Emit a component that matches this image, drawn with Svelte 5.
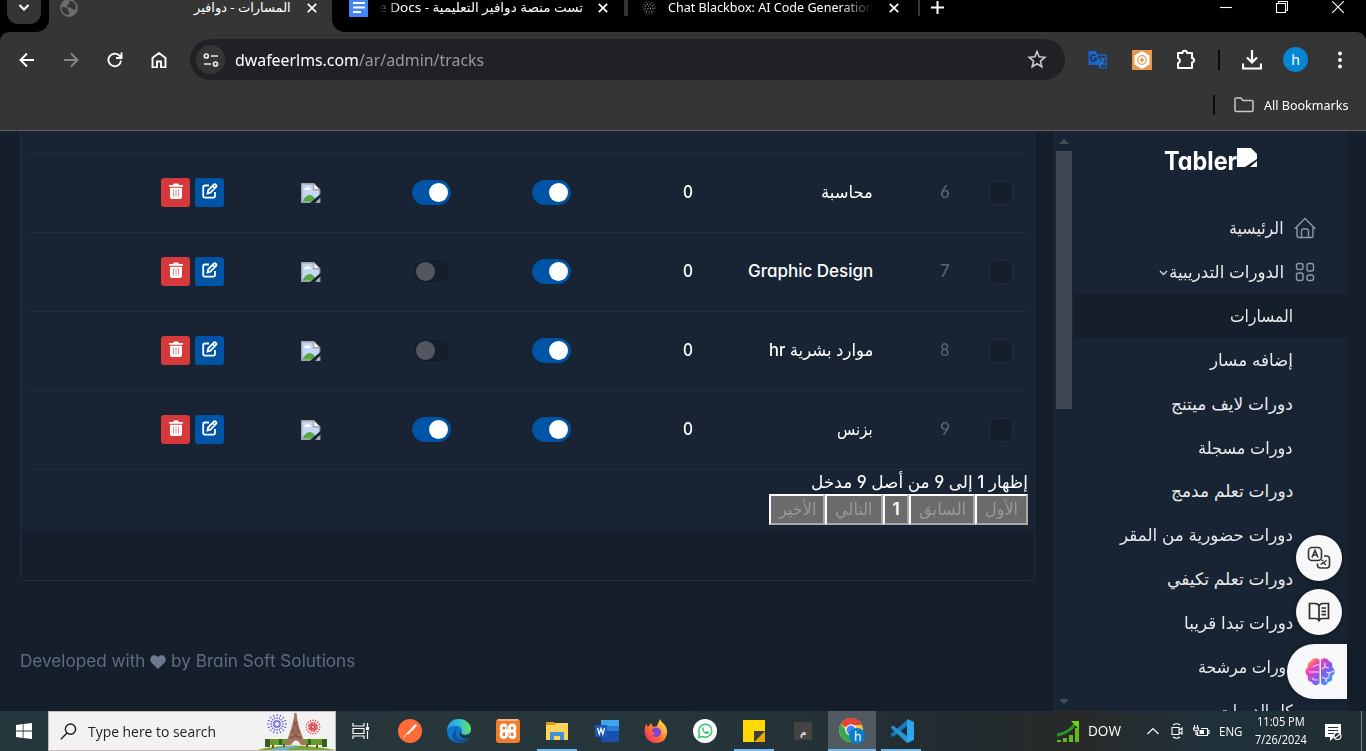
<script>
  function fit(node, w) {
    node.style.transform = `scaleX(${w / node.offsetWidth})`;
  }
  const rows = [
    { n: 6, name: 'محاسبة', w: 52, live: true },
    { n: 7, name: 'Graphic Design', w: 125, live: false },
    { n: 8, name: 'موارد بشرية hr', w: 104, live: false },
    { n: 9, name: 'بزنس', w: 36, live: true }
  ];
  const links = [
    ['المسارات', 63], ['إضافه مسار', 83], ['دورات لايف ميتنج', 122], ['دورات مسجلة', 95],
    ['دورات تعلم مدمج', 122], ['دورات حضورية من المقر', 173], ['دورات تعلم تكيفي', 126],
    ['دورات تبدا قريبا', 109], ['دورات مرشحة', 95], ['كل الدورات', 75]
  ];
  const pages = [['الأخير', 56, 37], ['التالي', 58, 38], ['1', 26, 7], ['السابق', 66, 47], ['الأول', 53, 33]];
  const rays = Array.from({ length: 16 }, (_, i) => i * 22.5);
</script>

{#snippet T(text, w)}<span class="fit" style="width:{w}px"><bdi use:fit={w}>{text}</bdi></span>{/snippet}
{#snippet X()}<svg class="x" viewBox="0 0 10 10"><path d="M.8.8 9.2 9.2M9.2.8.8 9.2" /></svg>{/snippet}

<div class="screen">
  <header class="tabs">
    <div class="corner"><div class="tabsearch"><svg width="12" height="8" viewBox="0 0 12 8"><path d="m1.500 1 4.500 4.500L10.500 1" fill="none" stroke="#fff" stroke-width="2" /></svg></div></div>
    <div class="tab active">
      <svg width="18" height="18" viewBox="0 0 18 18"><circle cx="9" cy="9" r="9" fill="#686b70" /><path d="M2 8c3 0 6 1 6 3s2 1 1 5C4 16 1 12 2 8ZM9 2c4 0 6 2 7 5l-1 4-3-1c-1-3-5 0-5-3 0-2 3-1 2-5Z" fill="#353535" /></svg>
      <div class="grow"></div>{@render T('المسارات - دوافير', 97)}{@render X()}
    </div>
    <div class="rest">
      <svg class="docs" width="20" height="22" viewBox="0 0 20 22"><path fill="#4285f4" d="M0 0h19v22H0z" /><path d="M4 8h12M4 12.500h12M4 17h8" stroke="#fff" stroke-width="2" /></svg>
      <div class="fadel">{@render T('تست منصة دوافير التعليمية - e Docs', 204)}</div>
      {@render X()}
      <i class="sep wide"></i>
      <svg class="bb" width="14" height="14" viewBox="0 0 14 14"><g fill="none" stroke="#999" stroke-width="1.200" stroke-dasharray="1.200 1.500"><circle cx="7" cy="7" r="1.500" /><circle cx="7" cy="7" r="4" /><circle cx="7" cy="7" r="6" stroke="#555" /></g></svg>
      <div class="fader">{@render T('Chat Blackbox: AI Code Generation', 206)}</div>
      {@render X()}
      <i class="sep"></i>
      <svg class="plus" width="13" height="13" viewBox="0 0 13 13"><path d="M6.500 0v13M0 6.500h13" stroke="#fff" stroke-width="2" /></svg>
      <div class="grow"></div>
      <div class="win">
        <svg width="12" height="12" viewBox="0 0 12 12"><path d="M0 6.500h12" /></svg>
        <svg width="12" height="12" viewBox="0 0 12 12"><path d="M.5 2.500h9v9h-9zM2.500 2.500v-2h9v9h-2" /></svg>
        <svg width="12" height="12" viewBox="0 0 12 12"><path d="m0 0 12 12M12 0 0 12" /></svg>
      </div>
    </div>
  </header>

  <section class="toolbar">
    <div class="bar">
      <nav class="navs">
        <svg viewBox="0 0 16 16"><path d="M15 8H2M8 1.500 1.500 8 8 14.500" /></svg>
        <svg viewBox="0 0 16 16" class="dim"><path d="M1 8h13M8 1.500 14.500 8 8 14.500" /></svg>
        <svg viewBox="0 0 16 16"><path d="M14 8.500a6.300 6.300 0 1 1-2-5.200L14.500 5.500M14.500.5v5.500H9" /></svg>
        <svg viewBox="0 0 16 16"><path d="M1.500 15.500V6L8 1l6.500 5v9.500H10v-6H6v6Z" /></svg>
      </nav>
      <div class="omni">
        <div class="site"><svg width="16" height="14" viewBox="0 0 16 14"><g fill="none" stroke="#e8e8e8" stroke-width="1.700"><circle cx="3.300" cy="3" r="2" /><circle cx="12.500" cy="11" r="2" /><path d="M8 3h7M1 11h7" /></g></svg></div>
        <span class="fit url" style="width:249px"><bdi use:fit={249}>dwafeerlms.com<span>/ar/admin/tracks</span></bdi></span>
        <div class="grow"></div>
        <svg width="20" height="19" viewBox="0 0 20 19"><path d="m10 1.500 2.100 5.300 5.700.5-4.300 3.800 1.300 5.600L10 13.700l-4.800 3 1.300-5.600-4.300-3.800 5.700-.5Z" fill="none" stroke="#ccc" stroke-width="1.600" /></svg>
      </div>
      <div class="ext">
        <svg width="20" height="20" viewBox="0 0 20 20"><path d="M1.500 1H8l1.200 3.500h8.300q1.300 0 1.300 1.300v11.400q0 1.300-1.300 1.300h-6L10.300 15H1.500Q.5 15 .5 14V2q0-1 1-1Z" fill="#1967d2" /><path d="M9.700 5.800h7q.8 0 .8.800v10q0 .8-.8.800h-4l1-2.500Z" fill="#2c3a4d" /><path d="M7.500 5.800A3 3 0 1 0 8.500 8.500H5.800" fill="none" stroke="#26303f" stroke-width="1.500" /><path d="M11.500 9H17M14.200 7.500V9M16 9c-.5 2.500-1.500 4-3 5M12.500 11l4 3.800" fill="none" stroke="#2b7de0" stroke-width="1.200" /></svg>
        <svg width="20" height="20" viewBox="0 0 20 20"><path d="M0 0h20v20H0z" fill="#e9974b" /><path d="m10 1 7.500 4.500v9L10 19l-7.500-4.500v-9Z" fill="#fff" /><circle cx="10" cy="10" r="4.300" fill="none" stroke="#e99645" stroke-width="1.200" /><path d="M10 7.800v4.400M7.800 10h4.400" stroke="#e99645" stroke-width="1.600" /></svg>
        <svg width="22" height="22" viewBox="0 0 22 22"><path d="M3 4H7.500a2.200 2.200 0 0 1 4.500 0h5v5.200a2.100 2.100 0 0 1 0 4.200V19H3v-4.800q2-.8 2-2.600T3 9Z" fill="none" stroke="#fff" stroke-width="2" stroke-linejoin="round" /></svg>
        <i class="div"></i>
        <svg width="20" height="20" viewBox="0 0 20 20"><path d="M10 0v12M5 7.500l5 5 5-5M1 13.500v5h18v-5" fill="none" stroke="#fff" stroke-width="2.200" /></svg>
        <b class="ava">h</b>
        <svg width="6" height="20" viewBox="0 0 6 20" fill="#fff"><circle cx="3" cy="3.500" r="1.900" /><circle cx="3" cy="10" r="1.900" /><circle cx="3" cy="16.500" r="1.900" /></svg>
      </div>
    </div>
    <div class="marks">
      <i class="div"></i>
      <svg width="20" height="16" viewBox="0 0 20 16"><path d="M1 13V2q0-1 1-1h5l2 2.500h9q1 0 1 1V13q0 1.500-1 1.500H2Q1 14.500 1 13Z" fill="none" stroke="#c7c7c7" stroke-width="1.500" /></svg>
      {@render T('All Bookmarks', 85)}
    </div>
  </section>

  <main class="page">
    <section class="content">
      <div class="card">
        <div class="table">
          <div class="stub"></div>
          {#each rows as r}
            <div class="row">
              <div class="acts">
                <span class="btn red"><svg width="14" height="16" viewBox="0 0 14 16"><path fill="#fff" d="M0 2h4l1-1.500h4L10 2h4v1.800H0ZM1 4.800h12V14q0 2-2 2H3q-2 0-2-2Z" /><path d="M4.500 6.500v7M7 6.500v7M9.500 6.500v7" stroke="#e68a8a" /></svg></span>
                <span class="btn blue"><svg width="16" height="16" viewBox="0 0 16 16"><path d="M7 2.500H3Q1.200 2.500 1.200 4.300v8.500q0 1.800 1.800 1.800h8.200q1.800 0 1.800-1.800V9M5.500 10.500l.7-3.200 5.600-5.600q1-1 2.100.1t.1 2.200L8.400 9.600ZM10.500 3l2.400 2.400" fill="none" stroke="#fff" stroke-width="1.800" /></svg></span>
              </div>
              <div><svg class="broken" width="20" height="20" viewBox="0 0 20 20"><path d="M.7.7h12l6 6v12.600H.7Z" fill="#c4d7f7" stroke="#a2a2a2" stroke-width="1.400" /><path d="M3 7q0-2 2-2 1-2 3 0 2 0 2 2Z" fill="#fff" /><path d="M1.500 18.500q3-7 8-6.500 4 1 6 6.500Z" fill="#58a942" /><path d="M12.500.7v6h6" fill="#fff" stroke="#a2a2a2" stroke-width="1.400" /><path d="m9 20 11-9.500V14l-6 6Z" fill="#182433" /></svg></div>
              <div><i class="sw" class:on={r.live}></i></div>
              <div><i class="sw on"></i></div>
              <div class="num">{@render T('0', 10)}</div>
              <div class="num">{@render T(r.name, r.w)}</div>
              <div class="idx">{@render T(String(r.n), 10)}</div>
              <div><i class="chk"></i></div>
            </div>
          {/each}
          <div class="info">{@render T('إظهار 1 إلى 9 من أصل 9 مدخل', 217)}</div>
          <div class="pager">
            {#each pages as [t, w, tw]}<span class="pg" class:cur={t === '1'} style="width:{w}px">{@render T(t, tw)}</span>{/each}
          </div>
        </div>
      </div>
      <footer>
        {@render T('Developed with', 125)}
        <svg width="16" height="14" viewBox="0 0 16 14"><path d="M8 14 1.300 7.500C-2 3.500 3-3 8 2c5-5 10 1.500 6.700 5.500Z" fill="#6c7a91" /></svg>
        {@render T('by Brain Soft Solutions', 184)}
      </footer>
    </section>

    <aside>
      <div class="scroll">
        <i class="up"></i><i class="thumb"></i><i class="grow"></i><i class="down"></i>
      </div>
      <div class="side">
        <div class="brand">{@render T('Tabler', 73)}<svg width="20" height="19" viewBox="0 0 20 19"><path d="M0 0h14l6 6v5L8 19H0ZM20 13v6h-7Z" fill="#fff" /></svg></div>
        <div class="item top">{@render T('الرئيسية', 55)}<svg width="22" height="22" viewBox="0 0 22 22"><path d="M1.500 11H3v7.500q0 2 2 2h12q2 0 2-2V11h1.500L11 1.500ZM7.500 20v-6q0-2 2-2h3q2 0 2 2v6" /></svg></div>
        <div class="item top">
          <svg class="chev" width="9" height="6" viewBox="0 0 9 6"><path d="m1 1 3.500 3.500L8 1" /></svg>{@render T('الدورات التدريبية', 115)}<svg width="22" height="22" viewBox="0 0 22 22"><rect x="2.500" y="2.500" width="6.500" height="6" rx="2" /><rect x="13" y="2.500" width="6.500" height="7.500" rx="2" /><rect x="2.500" y="12" width="6.500" height="7.500" rx="2" /><rect x="13" y="14" width="6.500" height="5.500" rx="2" /></svg>
        </div>
        {#each links as [t, w], i}<div class="item" class:sel={i === 0}>{@render T(t, w)}</div>{/each}
      </div>
    </aside>
    <div class="edge"></div>

    <div class="float">
      <span class="round"><svg width="24" height="24" viewBox="0 0 24 24"><g fill="none" stroke="#333" stroke-width="1.600"><rect x="1.500" y="1.500" width="13" height="13" rx="3.500" /><path d="m5 11.500 3-7 3 7M6 9h4M17 10h2.500q3 0 3 3v6q0 3-3 3h-6q-3 0-3-3v-1.500" /><path d="M13.500 18.500q4-1 6-4.500M15.500 16l3.500 3M14.500 14.500h2" stroke-width="1.300" /></g></svg></span>
      <span class="round"><svg width="22" height="20" viewBox="0 0 22 20"><path d="M11 3.500Q9.500 1.500 7 1.500H1.500v15H8q2 0 3 2 1-2 3-2h6.500v-15H15q-2.500 0-4 2ZM11 3.500v15M13.500 6h4.500M13.500 9.300h4.500M13.500 12.600h4.500" fill="none" stroke="#2c2c2c" stroke-width="1.700" /></svg></span>
      <span class="brain"><svg width="30" height="30" viewBox="0 0 30 30">
        <defs><linearGradient id="g" x1="0" y1="0" x2="30" y2="30" gradientUnits="userSpaceOnUse"><stop offset=".1" stop-color="#ffb13b" /><stop offset=".3" stop-color="#f43fb0" /><stop offset=".55" stop-color="#8b55f2" /><stop offset=".9" stop-color="#28a8fb" /></linearGradient></defs>
        <path fill="url(#g)" d="M14.500 3C12 0 7 1 6 4 3 5 2 8 3 10c-4 3-3 7 0 9-1 4 1 6 4 6 1 4 6 4 7.500 1ZM16 3c2-3 7-2 8 1 3 1 4 4 3 6 4 3 3 7 0 9 1 4-1 6-4 6-1 4-5.500 4-7 1Z" />
        <path d="M14 15H4M14 8h-3L8 10M13 23h-4l-2-2M20 6v4l-3 2M20 10l4 1M29 14l-5 2-3-1M24 16v3M17 20l4 2 3-2M21 22v3" fill="none" stroke="#eddcfb" stroke-width="1.200" />
      </svg></span>
    </div>
  </main>

  <footer class="task">
    <div class="start"><svg width="16" height="16" viewBox="0 0 16 16"><path fill="#fff" d="m0 2 6.700-1v6.500H0ZM7.500.9 16 0v7.500H7.500ZM0 8.500h6.700V15L0 14ZM7.500 8.500H16V16l-8.500-1Z" /></svg></div>
    <div class="search">
      <svg width="17" height="17" viewBox="0 0 17 17"><path d="M10.500 1a5 5 0 1 1 0 10.300 5 5 0 0 1 0-10.300ZM7 10 .8 16.300" fill="none" stroke="#1d1d1d" stroke-width="1.400" /></svg>
      {@render T('Type here to search', 128)}
      <div class="grow"></div>
      <svg width="78" height="38" viewBox="0 0 78 38">
        <path d="M0 38q35-9 78 0Z" fill="#76a83c" /><path d="m12 38 20-4h10l-14 4Z" fill="#66b5d5" />
        <g fill="#6b9a2e"><path d="M8 27h24v6H8zM46 27h24v6H46z" /></g><g fill="#35601f"><path d="M8 27h5v8H8zM22 27h3v6h-3zM51 27h3v6h-3zM65 27h5v8h-5z" /></g><path d="M16 33v3M27 32v3M50 32v3M60 33v3" stroke="#76502e" stroke-width="2" />
        <path d="M37.500 1h2q1 14 9.500 32h-5q-5-9-10 0h-6Q36 15 37.500 1Z" fill="#a7745d" /><path d="M34 19h9M32 25h13M37 9l4 9M40 9l-4 9M35 20l9 7M42 20l-9 7" stroke="#674d48" stroke-width=".8" />
        <g stroke="#5558d4" stroke-width="1" stroke-dasharray="2 1">{#each rays as a}<path d="M20 10V2" transform="rotate({a} 20 12)" />{/each}</g>
        <g stroke="#df464d" stroke-width="1.200">{#each rays as a}<path d="M56 14V7.500" stroke-dasharray="4 1" transform="rotate({a} 56 15)" />{/each}</g>
      </svg>
    </div>
    <div class="apps">
      <span><svg width="18" height="18" viewBox="0 0 18 18"><g fill="none" stroke="#fff" stroke-width="1.200"><path d="M1 1v3h11V1M1 6.500h11v5H1ZM1 17v-3h11v3M15.500 1v4M15.500 9v8" /></g><path d="M14 5h3v3h-3z" fill="#fff" /></svg></span>
      <span><svg width="24" height="24" viewBox="0 0 24 24"><circle cx="12" cy="12" r="12" fill="#ff6c37" /><path d="m5.500 18.500 4-4.500M9 14.500l5-5 1 1-5 4.500Z" stroke="#fff" fill="#fff" /><path d="m13.500 9 3-3.200q2.500-1.200 2.200 1.200L15 10.700Z" fill="#fff" /></svg></span>
      <span><svg width="24" height="24" viewBox="0 0 24 24"><defs><linearGradient id="e" x1="0" x2="1"><stop stop-color="#2292e5" /><stop offset=".55" stop-color="#37c8d0" /><stop offset="1" stop-color="#66db55" /></linearGradient></defs><circle cx="12" cy="12" r="12" fill="#0a76cc" /><path d="M0 11C1 3 6 0 12 0c7 0 12 5 12 10 0 6-7 7-10 4 2-2 1-6-3-7C6 6 2 8 0 11Z" fill="url(#e)" /><path d="M10 9c-4 8 3 14 11 10-3 5-8 6-12 4-5-3-4-10 1-14Z" fill="#125299" /><path d="M13 12c1 5 8 6 11 1v4l-2 2c-6 2-11-1-9-7Z" fill="#25363b" /></svg></span>
      <span><svg width="24" height="24" viewBox="0 0 24 24"><rect width="24" height="24" rx="3" fill="#ee7c2b" /><path d="M2 1h20" stroke="#f7b47d" stroke-width="2" /><path d="M9.500 12H7.500Q5 12 5 9t3-3q2 0 2.500 2v8.500q-.5 2-2.500 2-3 0-3-3T7.500 12h9q2.500 0 2.500 3.500t-3 3q-2 0-2.500-2V8q.5-2 2.500-2 3 0 3 3t-2.500 3" fill="none" stroke="#fff" stroke-width="2.800" stroke-linejoin="round" /><path d="M10.800 7v3M13.200 14v3" stroke="#ee7c2b" stroke-width="1" /></svg></span>
      <span class="run"><svg width="22" height="20" viewBox="0 0 22 20"><path d="M0 2h22v17H0z" fill="#ffd45d" /><path d="M0 1h8l2 3H0Z" fill="#dc9a12" /><path d="M4 19v-8h14v8h-4v-4H8v4Z" fill="#3d93d9" /></svg></span>
      <span><svg width="24" height="22" viewBox="0 0 24 22"><path d="M6 0h18v22H6z" fill="#174fae" /><path d="M6 0h18v6H6z" fill="#41a5ee" /><path d="M6 6h18v5H6z" fill="#2b7cd3" /><path d="M0 5h12v12H0z" fill="#1959b9" /><path d="m2.500 8 1.700 6L6 8.500 7.800 14 9.500 8" fill="none" stroke="#fff" stroke-width="1.300" /></svg></span>
      <span><svg width="24" height="24" viewBox="0 0 24 24"><defs><linearGradient id="f" x1="1" y1="0" x2="0" y2="1"><stop offset=".1" stop-color="#ffe348" /><stop offset=".5" stop-color="#ff7d2f" /><stop offset="1" stop-color="#f11968" /></linearGradient></defs><path d="M16 0c1 4 8 6 7 14S17 24 12 24C3 24-2 15 2 5l2 3 3-4 2 4 4-1Z" fill="url(#f)" /><path d="M8 10q6-4 9 2c1 6-6 8-9 4l4-1q-4-1-4-5Z" fill="#8143dc" /></svg></span>
      <span><svg width="24" height="24" viewBox="0 0 24 24"><circle cx="12" cy="12" r="12" fill="#fff" /><path d="m5.500 18.500 1-4A6.500 6.500 0 1 1 9.500 17.500Z" fill="none" stroke="#35c56d" stroke-width="1.500" /><path d="M9 9q1-2 2 1l-.5 1q1 2 2.500 2l1-1 2 1q0 2-2 2-4 0-5-6Z" fill="#35c56d" /></svg></span>
      <span class="run"><svg width="22" height="22" viewBox="0 0 22 22"><path d="M0 0h22v11L11 22H0Z" fill="#ffd800" /><path d="M11 22h11V11Z" fill="#edab0b" /><path d="M11 22V11h11Z" fill="#3c3d3c" /></svg></span>
      <span><b class="meem">م</b></span>
      <span class="run cur"><svg width="26" height="26" viewBox="0 0 26 26"><circle cx="12" cy="12" r="12" fill="#f0c33c" /><path d="M12 12 1.700 6A12 12 0 0 1 23 7H12Z" fill="#e34436" /><path d="M1.700 6A12 12 0 0 0 12 24l4-9-8-1Z" fill="#33a852" /><circle cx="12" cy="12" r="5.700" fill="#fff" /><circle cx="12" cy="12" r="4.500" fill="#4285f4" /><circle cx="18" cy="18" r="8" fill="#087fc5" /></svg><em>h</em></span>
      <span class="run"><svg width="24" height="24" viewBox="0 0 24 24"><path d="M17 1v6L3 18l-2.500-2.500Z" fill="#147cc1" /><path d="M.5 8.500 3 6.500l14 10.500v7Z" fill="#2692d8" /><path d="m17 0 7 3v18l-7 3Z" fill="#29a7ef" /></svg></span>
    </div>
    <div class="grow"></div>
    <div class="tray">
      <svg width="23" height="23" viewBox="0 0 23 23"><path d="M0 20h4v2H0zM6 18h4v4H6zM12 15h4v7h-4zM18 8h4v14h-4z" fill="#61bb13" /><path d="M0 15Q12 13 18 4" fill="none" stroke="#249b26" stroke-width="3" /><path d="M14 1h8v8Z" fill="#6ed50b" /></svg>
      {@render T('DOW', 33)}
      <svg class="t1" width="12" height="8" viewBox="0 0 12 8"><path d="m.5 7 5.500-5.500L11.500 7" /></svg>
      <svg class="t2" width="12" height="16" viewBox="0 0 12 16"><path d="M1 4.500h7v7H1ZM8 7l3-2v6L8 9M2 2q4-2.500 7 0M2 14q4 2.500 7 0" /></svg>
      <svg class="t3" width="17" height="12" viewBox="0 0 17 12"><path d="M4.500 7v3.500H14.500v-7H8M15 5.500h1V8.500H15M1.500 0v3M4.500 0v3M.5 3h5v1.500Q5 6 3 6 .5 6 .5 3ZM3 6v3.500h1.500" /><path d="M6.500 5h4.500v4H6.500z" fill="#fff" stroke="none" /></svg>
      <div class="eng">{@render T('ENG', 23)}</div>
      <div class="clock">{@render T('11:05 PM', 48)}{@render T('7/26/2024', 52)}</div>
      <svg class="t4" width="17" height="17" viewBox="0 0 17 17"><path d="M0 0h16v13H9l-4 4v-4H0Z" fill="#fff" stroke="none" /><path d="M3 3.500h10M3 6.500h10M3 9.500h6" stroke="#263237" /><circle cx="12.500" cy="12" r="3.500" fill="#26343a" stroke="#fff" /><path d="m10 14 5-4" /></svg>
      <i class="peek"></i>
    </div>
  </footer>
</div>

<style>
  :global(body) { background: #000; overflow: hidden; }
  .screen { width: 1366px; height: 751px; overflow: hidden; display: flex; flex-direction: column; font-family: "Noto Sans", "DejaVu Sans", sans-serif; color: #fff; background: #000; }
  .screen * { box-sizing: border-box; }
  svg { flex: none; display: block; }
  i, span.fit { flex: none; }
  .grow { flex: 1; }
  .fit { display: inline-flex; direction: ltr; white-space: nowrap; line-height: 1.3; }
  .fit bdi { display: inline-block; flex: none; transform-origin: 0 50%; }
  .tabs { height: 32px; flex: none; display: flex; background: #353535; font-size: 13px; }
  .corner { width: 49px; background: #000; border-bottom-right-radius: 13px; padding-left: 7px; }
  .tabsearch { width: 34px; height: 24px; background: #353535; border-radius: 0 0 11px 11px; display: flex; justify-content: center; padding-top: 4px; }
  .tab { width: 283px; height: 15px; display: flex; align-items: center; padding-left: 11px; }
  .x { width: 10px; height: 10px; margin-left: 16px; fill: none; stroke: #fff; stroke-width: 1.7; }
  .tab .x { margin-right: 15px; }
  .rest { flex: 1; background: #000; border-bottom-left-radius: 13px; display: flex; align-items: center; padding: 0 22px 17px 17px; }
  .docs { margin-top: -3px; margin-right: 10px; }
  .fadel { mask-image: linear-gradient(90deg, transparent, #000 20px); display: flex; }
  .fader { mask-image: linear-gradient(270deg, transparent, #000 35px); display: flex; }
  .sep { width: 2px; height: 17px; background: #353535; margin: 0 0 0 19px; }
  .sep.wide { width: 4px; margin: 0 14px 0 16px; }
  .rest .x { margin-left: 15px; }
  .bb { margin-right: 12px; }
  .plus { margin-left: 11px; }
  .win { display: flex; gap: 44px; margin-top: -1px; }
  .win svg { fill: none; stroke: #fff; stroke-width: 1.1; }

  .toolbar { height: 99px; flex: none; background: #353535; border-radius: 9px 9px 0 0; border-bottom: 1px solid #626262; padding-top: 7px; }
  .bar { height: 41px; display: flex; align-items: center; }
  .navs { width: 190px; padding-left: 19px; display: flex; gap: 28px; }
  .navs svg { width: 16px; height: 16px; fill: none; stroke: #fff; stroke-width: 1.9; }
  .navs .dim { stroke: #868686; }
  .omni { width: 875px; height: 41px; border-radius: 21px; background: #202124; display: flex; align-items: center; padding: 0 18px 0 6px; }
  .site { width: 29px; height: 29px; border-radius: 50%; background: #353535; display: grid; place-items: center; margin-right: 10px; }
  .url { font-size: 16px; margin-top: 2px; }
  .url bdi > span { color: #999a9c; }
  .ext { flex: 1; display: flex; align-items: center; padding-left: 23px; }
  .ext > :nth-child(2) { margin-left: 24px; }
  .ext > :nth-child(3) { margin-left: 23px; }
  .ext > :nth-child(4) { margin-left: 21px; }
  .ext > :nth-child(5) { margin-left: 22px; }
  .ext > :nth-child(6) { margin-left: 21px; }
  .ext > :nth-child(7) { margin-left: 29px; }
  .div { width: 2px; height: 20px; background: #0b0b0b; }
  .ava { width: 25px; height: 25px; border-radius: 50%; background: #0487d3; font-size: 14px; font-weight: 400; line-height: 25px; text-align: center; }
  .marks { height: 50px; display: flex; align-items: center; justify-content: flex-end; padding-right: 17px; font-size: 13px; }
  .marks svg { margin: 0 10px 0 19px; }

  .page { height: 580px; flex: none; display: flex; position: relative; background: #151f2c; overflow: hidden; font-family: Inter, "DejaVu Sans", sans-serif; font-feature-settings: "cv03", "cv04", "cv11"; font-size: 17px; }
  .content { width: 1054px; padding-left: 20px; }
  .card { width: 1015px; height: 450px; border: 1px solid #1f2e41; border-top: 0; border-radius: 0 0 5px 5px; }
  .table { height: 400px; background: #182433; padding: 0 6px; }
  .stub { height: 23px; border-bottom: 1px solid #1f2e41; }
  .row { height: 79px; border-bottom: 1px solid #1f2e41; padding-bottom: 2px; display: grid; grid-template-columns: 197px 97px 130px 120px 122px 180px 77px 63px; align-items: center; }
  .row > div { display: flex; justify-content: flex-end; }
  .row .acts { gap: 5px; }
  .btn { width: 29px; height: 29px; border-radius: 3px; display: grid; place-items: center; padding-bottom: 2px; }
  .red { background: #d63939; }
  .blue { background: #0054a6; }
  .broken { margin-top: 2px; }
  .sw { width: 39px; height: 25px; border-radius: 13px; background: #151f2c; border: 1px solid #1b293a; padding: 2px; display: flex; }
  .sw::after { content: ""; width: 19px; height: 19px; border-radius: 50%; background: #51565f; }
  .sw:not(.on)::after { margin-left: 1px; }
  .sw.on { background: #0054a6; border-color: #0054a6; justify-content: flex-end; }
  .sw.on::after { background: #fff; }
  .num { font-weight: 500; }
  .idx { color: #596678; }
  .chk { width: 24px; height: 24px; border-radius: 4px; background: #151f2c; border: 1px solid #1c2b3e; margin-top: 2px; }
  .info { height: 24px; display: flex; justify-content: flex-end; align-items: center; font-weight: 500; }
  .pager { display: flex; justify-content: flex-end; }
  .pg { height: 31px; background: #6b6b6b; border: 2px solid; border-color: #fff #a9a9a9 #a9a9a9 #fff; color: #999; display: flex; align-items: center; justify-content: center; }
  .cur { color: #fff; font-weight: 600; }
  .content footer { display: flex; align-items: center; gap: 5px; margin-top: 69px; color: #5f6c80; height: 23px; }

  aside { width: 293px; display: flex; background: #182433; border-left: 1px solid #1f2e41; }
  .scroll { width: 19px; padding: 8px 2px 7px 1px; display: flex; flex-direction: column; align-items: center; }
  .up, .down { border: 5px solid transparent; border-top: 0; border-bottom-color: #434d58; height: 5px; }
  .thumb { width: 16px; height: 258px; background: #3d4651; margin-top: 7px; }
  .down { border-bottom: 0; border-top: 5px solid #434d58; }
  .side { flex: 1; overflow: hidden; color: #e8eaec; }
  .brand { height: 75px; padding: 17px 90px 0 0; display: flex; justify-content: flex-end; align-items: flex-start; font-size: 25px; font-weight: 700; line-height: 1; color: #fff; }
  .brand .fit { line-height: 26px; }
  .item { height: 43.85px; display: flex; align-items: center; justify-content: flex-end; padding: 1px 54px 0 0; }
  .item.top { padding: 0 31px 0 0; }
  .item.top svg { margin-left: 10px; fill: none; stroke: #8c97a8; stroke-width: 1.4; }
  .item.top .chev { margin: 3px 1px 0 0; stroke: #cfd4da; }
  .sel { background: #151f2c; }
  .edge { width: 19px; }
  .float { position: absolute; right: 19px; top: 404px; display: flex; flex-direction: column; align-items: flex-end; }
  .round { width: 46px; height: 46px; border-radius: 50%; background: #f8f8f9; display: grid; place-items: center; margin: 0 5px 8px 0; box-shadow: 0 1px 7px #0006; }
  .brain { width: 60px; height: 55px; margin-top: 1px; background: #f8f8fa; border-radius: 28px 0 0 28px; display: flex; align-items: center; padding-left: 18px; box-shadow: 0 0 6px #0004; }

  .task { height: 40px; flex: none; display: flex; align-items: center; background: linear-gradient(90deg, #25363c, #26363b 50%, #222c30 70%, #292a29 79%, #20303a 88%, #202f33); }
  .start { width: 48px; display: grid; place-items: center; }
  .search { width: 288px; height: 40px; background: #f2f2f2; border: 1px solid #c4bcbc; display: flex; align-items: center; color: #222; font-size: 15px; padding-left: 11px; font-family: "Open Sans", sans-serif; }
  .search .fit { margin-left: 11px; margin-top: 1px; }
  .apps { display: flex; height: 40px; }
  .apps > span { width: 49.2px; display: grid; place-items: center; position: relative; }
  .apps .run::after { content: ""; position: absolute; left: 4px; right: 5px; bottom: 0; height: 2px; background: #76b9ed; }
  .apps .cur { background: #505a60; width: 48px; margin-right: 1.2px; }
  .apps .cur::after { left: 0; right: 0; }
  .apps em { position: absolute; left: 26px; top: 17px; font: 12px/17px "Noto Sans", sans-serif; }
  .meem { width: 18px; height: 18px; border-radius: 2px; background: #454444; font-size: 9px; line-height: 20px; text-align: center; color: #ddd; }
  .tray { width: 309px; height: 40px; display: flex; align-items: center; font-size: 14px; font-family: "Open Sans", sans-serif; }
  .tray > .fit { margin-left: 8px; }
  .tray svg:not(:first-child) { fill: none; stroke: #fff; stroke-width: 1.1; }
  .t1 { margin-left: 26px; }
  .t2 { margin-left: 12px; }
  .t3 { margin-left: 10px; }
  .eng { margin-left: 9px; font-size: 12px; }
  .clock { width: 52px; margin-left: 13px; display: flex; flex-direction: column; align-items: center; gap: 2px; font-size: 12px; }
  .t4 { margin: 2px 19px 0 18px; }
  .peek { width: 1px; height: 40px; background: #7d888c; }
</style>
